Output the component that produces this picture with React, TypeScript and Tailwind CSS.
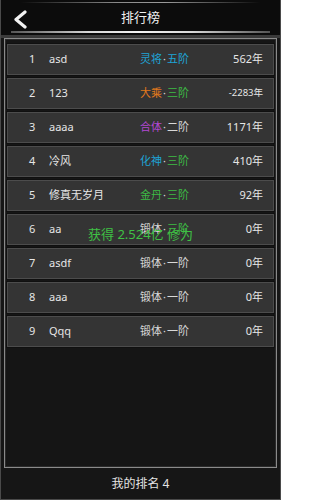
import React from 'react';

type Part = { text: string; color: string };

const rows: { no: number; name: string; realm: Part; stage: Part; years: string; small?: boolean }[] = [
  { no: 1, name: 'asd', realm: { text: '灵将', color: 'text-[#1ea4d6]' }, stage: { text: '五阶', color: 'text-[#1ea4d6]' }, years: '562年' },
  { no: 2, name: '123', realm: { text: '大乘', color: 'text-[#e2791c]' }, stage: { text: '三阶', color: 'text-[#3dba45]' }, years: '-2283年', small: true },
  { no: 3, name: 'aaaa', realm: { text: '合体', color: 'text-[#b248d2]' }, stage: { text: '二阶', color: 'text-[#d8d8d8]' }, years: '1171年' },
  { no: 4, name: '冷风', realm: { text: '化神', color: 'text-[#1ea4d6]' }, stage: { text: '三阶', color: 'text-[#3dba45]' }, years: '410年' },
  { no: 5, name: '修真无岁月', realm: { text: '金丹', color: 'text-[#3dba45]' }, stage: { text: '三阶', color: 'text-[#3dba45]' }, years: '92年' },
  { no: 6, name: 'aa', realm: { text: '锻体', color: 'text-[#d8d8d8]' }, stage: { text: '三阶', color: 'text-[#3dba45]' }, years: '0年' },
  { no: 7, name: 'asdf', realm: { text: '锻体', color: 'text-[#d8d8d8]' }, stage: { text: '一阶', color: 'text-[#d8d8d8]' }, years: '0年' },
  { no: 8, name: 'aaa', realm: { text: '锻体', color: 'text-[#d8d8d8]' }, stage: { text: '一阶', color: 'text-[#d8d8d8]' }, years: '0年' },
  { no: 9, name: 'Qqq', realm: { text: '锻体', color: 'text-[#d8d8d8]' }, stage: { text: '一阶', color: 'text-[#d8d8d8]' }, years: '0年' },
];

const font = { fontFamily: '"Noto Sans", "Noto Sans CJK SC", sans-serif' };

const Ranking = () => {
  return (
    <div className="w-[281px] h-[500px] bg-[#161616] flex flex-col border-x border-b border-[#4a4a4a] text-[#e6e6e6]" style={font}>
      {/* Header */}
      <div className="h-[35px] bg-[#0c0c0c] flex flex-col">
        <div className="h-[2px]" />
        <div className="h-px mx-[20px] bg-[linear-gradient(90deg,transparent,#8a8a8a_40%,#9a9a9a_60%,transparent)]" />
        <div className="flex-1 flex items-center relative">
          <svg className="absolute left-[11px] top-[7px]" width="16" height="19" viewBox="0 0 16 19">
            <path d="M13 2 L4 9.5 L13 17" fill="none" stroke="#f2f2f2" strokeWidth="3.2" strokeLinecap="round" strokeLinejoin="round" />
          </svg>
          <div className="flex-1 text-center text-[13px] leading-none text-[#f0f0f0]">排行榜</div>
        </div>
        <div className="h-[2px] mx-[10px] bg-[linear-gradient(90deg,#555,#d8d8d8_30%,#f4f4f4_50%,#d8d8d8_70%,#555)]" />
        <div className="h-[2px]" />
      </div>
      <div className="h-[3px] bg-[#3a3a3a]" />

      {/* Panel */}
      <div className="flex-1 mx-[3px] border border-[#8a8a8a] shadow-[inset_0_0_0_1px_#2a2a2a] bg-[#151515] px-[2px] pt-[5px] flex flex-col gap-[3px]">
        {rows.map((r) => (
          <div
            key={r.no}
            className="relative h-[31px] flex items-center bg-[#343434] border border-[#4c4c4c] shadow-[0_0_0_1px_#101010] text-[11px]"
          >
            <div className="w-[41px] pl-[21px] text-[#e6e6e6]">{r.no}</div>
            <div className="w-[91px] text-[#e6e6e6]">{r.name}</div>
            <div className="w-[58px] flex items-center">
              <span className={r.realm.color}>{r.realm.text}</span>
              <span className="text-[#d8d8d8] mx-[1px]">·</span>
              <span className={r.stage.color}>{r.stage.text}</span>
            </div>
            <div className={`flex-1 text-right pr-[10px] text-[#e6e6e6] ${r.small ? 'text-[9.5px]' : ''}`}>{r.years}</div>
            {r.no === 6 && (
              <div className="absolute left-[80px] top-[13px] text-[13px] leading-none text-[#3fc044] whitespace-nowrap">获得 2.524亿 修为</div>
            )}
          </div>
        ))}
      </div>

      {/* Footer */}
      <div className="h-[31px] flex items-center justify-center text-[12px] text-[#e4e4e4]">我的排名 4</div>
    </div>
  );
};

export default function App() {
  return <Ranking />;
}
